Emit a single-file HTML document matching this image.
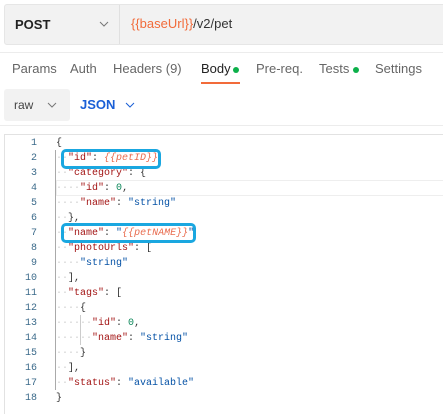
<!DOCTYPE html><html><head><style>
body{margin:0;width:443px;height:414px;background:#fff;font-family:"Liberation Sans",sans-serif;position:relative;overflow:hidden}
.a{position:absolute}
.code{font-family:"Liberation Mono",monospace;font-size:10px;white-space:pre;line-height:15px}
.k{color:#a31515}.s{color:#0451a5}.n{color:#098658}.p{color:#333}.d{color:#ccc}
.v{color:#e86c4f;font-style:italic}
.ln{position:absolute;left:14px;width:23px;text-align:right;color:#3b6a8a;font-family:"Liberation Mono",monospace;font-size:10px;line-height:15px}
.box{position:absolute;border:3px solid #1aa7e0;border-radius:5px}
</style></head><body>
<div class="a" style="left:4px;top:4px;width:445px;height:39px;background:#f2f2f2;border:1px solid #e6e6e6;border-radius:3px"></div>
<div class="a" style="left:119px;top:5px;width:1px;height:39px;background:#e0e0e0"></div>
<div class="a" style="left:15px;top:17px;font-size:13px;font-weight:bold;color:#222">POST</div>
<svg class="a" style="left:99px;top:20px" width="10" height="8"><path d="M1 2l4 4 4-4" stroke="#777" fill="none"/></svg>
<div class="a" style="left:131px;top:16px;font-size:13px;color:#333"><span style="color:#f26b3a">{{baseUrl}}</span>/v2/pet</div>
<div class="a" style="left:0;top:52px;width:443px;height:1px;background:#ececec"></div>
<div class="a" style="top:61px;font-size:13px;color:#666;left:0;width:443px">
<span class="a" style="left:12px">Params</span><span class="a" style="left:70px">Auth</span><span class="a" style="left:113px">Headers (9)</span><span class="a" style="left:201px;color:#222">Body</span><span class="a" style="left:256px">Pre-req.</span><span class="a" style="left:319px">Tests</span><span class="a" style="left:375px">Settings</span></div>
<div class="a" style="left:233px;top:67px;width:6px;height:6px;border-radius:3px;background:#0cb04a"></div>
<div class="a" style="left:353px;top:67px;width:6px;height:6px;border-radius:3px;background:#0cb04a"></div>
<div class="a" style="left:201px;top:82px;width:39px;height:2px;background:#f26b3a"></div>
<div class="a" style="left:4px;top:89px;width:66px;height:32px;background:#f2f2f2;border-radius:3px"></div>
<div class="a" style="left:14px;top:98px;font-size:12px;color:#444">raw</div>
<svg class="a" style="left:47px;top:101px" width="10" height="8"><path d="M1 2l4 4 4-4" stroke="#777" fill="none"/></svg>
<div class="a" style="left:80px;top:97px;font-size:13px;font-weight:bold;color:#1a5fd6">JSON</div>
<svg class="a" style="left:125px;top:101px" width="10" height="8"><path d="M1 2l4 4 4-4" stroke="#1a5fd6" fill="none"/></svg>
<div class="a" style="left:0;top:125px;width:443px;height:1px;background:#ececec"></div>
<div class="a" style="left:4px;top:134px;width:440px;height:1px;background:#e2e2e2"></div>
<div class="a" style="left:4px;top:134px;width:1px;height:280px;background:#e2e2e2"></div>
<div class="a" style="left:55px;top:150px;width:1px;height:240px;background:#aaa"></div>
<div class="a" style="left:80px;top:315px;width:1px;height:30px;background:#ccc"></div>
<div class="a" style="left:56px;top:180px;width:390px;height:14px;border:1px solid #eee"></div>
<div class="a" style="top:136px;left:0">
<div class="ln" style="top:0">1</div><div class="ln" style="top:15px">2</div><div class="ln" style="top:30px">3</div><div class="ln" style="top:45px">4</div><div class="ln" style="top:60px">5</div><div class="ln" style="top:75px">6</div><div class="ln" style="top:90px">7</div><div class="ln" style="top:105px">8</div><div class="ln" style="top:120px">9</div><div class="ln" style="top:135px">10</div><div class="ln" style="top:150px">11</div><div class="ln" style="top:165px">12</div><div class="ln" style="top:180px">13</div><div class="ln" style="top:195px">14</div><div class="ln" style="top:210px">15</div><div class="ln" style="top:225px">16</div><div class="ln" style="top:240px">17</div><div class="ln" style="top:255px">18</div>
</div>
<div class="a code" style="left:56px;top:136px"><span class="p">{</span>
<span class="d">··</span><span class="k">"id"</span><span class="p">: </span><span class="v">{{petID}}</span>
<span class="d">··</span><span class="k">"category"</span><span class="p">: {</span>
<span class="d">····</span><span class="k">"id"</span><span class="p">: </span><span class="n">0</span><span class="p">,</span>
<span class="d">····</span><span class="k">"name"</span><span class="p">: </span><span class="s">"string"</span>
<span class="d">··</span><span class="p">},</span>
<span class="d">··</span><span class="k">"name"</span><span class="p">: </span><span class="s">"</span><span class="v">{{petNAME}}</span><span class="s">"</span>
<span class="d">··</span><span class="k">"photoUrls"</span><span class="p">: [</span>
<span class="d">····</span><span class="s">"string"</span>
<span class="d">··</span><span class="p">],</span>
<span class="d">··</span><span class="k">"tags"</span><span class="p">: [</span>
<span class="d">····</span><span class="p">{</span>
<span class="d">······</span><span class="k">"id"</span><span class="p">: </span><span class="n">0</span><span class="p">,</span>
<span class="d">······</span><span class="k">"name"</span><span class="p">: </span><span class="s">"string"</span>
<span class="d">····</span><span class="p">}</span>
<span class="d">··</span><span class="p">],</span>
<span class="d">··</span><span class="k">"status"</span><span class="p">: </span><span class="s">"available"</span>
<span class="p">}</span></div>
<div class="box" style="left:61px;top:149px;width:94px;height:14px"></div>
<div class="box" style="left:61px;top:223px;width:129px;height:14px"></div>
</body></html>
